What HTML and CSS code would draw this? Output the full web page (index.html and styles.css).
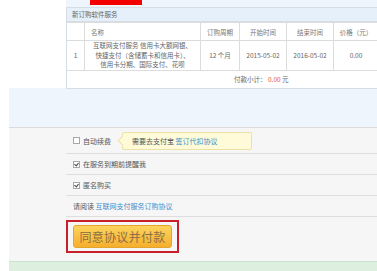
FILE: index.html
```
<!DOCTYPE html>
<html lang="zh-CN">
<head>
  <meta charset="UTF-8">
  <title>订购软件服务</title>
  <link rel="stylesheet" href="styles.css">
</head>
<body>
  <div class="page">
    <div class="top">
      <div class="top-side"></div>
      <div class="top-main">
        <div class="mark"></div>
        <div class="panel">
          <div class="panel-title">新订购软件服务</div>
          <table class="orders">
            <thead>
              <tr>
                <th class="c-no"></th>
                <th class="c-name">名称</th>
                <th class="c-period">订购周期</th>
                <th class="c-date">开始时间</th>
                <th class="c-date">结束时间</th>
                <th class="c-price">价格（元）</th>
                <th class="c-extra"></th>
              </tr>
            </thead>
            <tbody>
              <tr>
                <td>1</td>
                <td class="name">互联网支付服务 信用卡大额网银、<br>快捷支付（含储蓄卡和信用卡）、<br>信用卡分期、国际支付、花呗</td>
                <td>12 个月</td>
                <td>2015-05-02</td>
                <td>2016-05-02</td>
                <td>0.00</td>
                <td></td>
              </tr>
            </tbody>
          </table>
          <div class="total">付款小计： <span class="amount">0.00</span> 元</div>
        </div>
      </div>
    </div>
    <div class="top-gap"></div>

    <div class="options">
      <div class="opt opt-first">
        <span class="check"></span>
        <span>自动续费</span>
        <span class="tip">需要去支付宝 <a href="#">签订代扣协议</a></span>
      </div>
      <div class="opt">
        <span class="check checked"></span>
        <span>在服务到期前提醒我</span>
      </div>
      <div class="opt">
        <span class="check checked"></span>
        <span>匿名购买</span>
      </div>
      <div class="opt">
        <span>请阅读 <a href="#">互联网支付服务订购协议</a></span>
      </div>
      <div class="pay-area">
        <div class="highlight">
          <button class="pay-btn">同意协议并付款</button>
        </div>
      </div>
    </div>
    <div class="footer-band"></div>
  </div>
</body>
</html>
```

FILE: styles.css
```
html, body {
  margin: 0;
  padding: 0;
  overflow: hidden;
  background: #fff;
}
body {
  width: 377px;
  height: 271px;
  font-family: "Noto Sans CJK SC", "Liberation Sans", sans-serif;
  color: #666;
  font-size: 6.5px;
}
a {
  color: #3b8ccc;
  text-decoration: none;
}
.page {
  margin-left: 9px;
  width: 368px;
  overflow: hidden;
}
.top {
  display: flex;
  height: 88px;
}
.top-side {
  width: 57px;
  flex: none;
  background: #fff;
}
.top-main {
  flex: 1;
  min-width: 0;
  background: #eef5fc;
  position: relative;
  padding-top: 7px;
}
.mark {
  position: absolute;
  left: 24px;
  top: 0;
  width: 52px;
  height: 5px;
  background: #f30000;
}
.panel {
  background: #fff;
  border: 1px solid #d6dde4;
  border-right: none;
  height: 80px;
  overflow: hidden;
}
.panel-title {
  height: 13px;
  line-height: 13px;
  padding-left: 5px;
  background: #e5f0fa;
  border-bottom: 1px solid #d6dde4;
}
.orders {
  border-collapse: collapse;
  table-layout: fixed;
  width: 340px;
}
.orders th, .orders td {
  border: 1px solid #dcdcdc;
  font-weight: normal;
  text-align: center;
  padding: 0;
  white-space: nowrap;
}
.orders tr > :first-child {
  border-left: none;
}
.orders th {
  height: 17px;
  color: #777;
}
.orders td {
  height: 29px;
  line-height: 9.5px;
}
.orders th.c-name {
  text-align: left;
  text-indent: 6px;
}
.c-no { width: 17px; }
.c-name { width: 115px; }
.c-period { width: 38px; }
.c-date { width: 46px; }
.c-price { width: 44px; }
.c-extra { width: 34px; }
.total {
  height: 17px;
  line-height: 17px;
  padding-left: 167px;
}
.amount {
  color: #e0563c;
}
.top-gap {
  height: 39px;
  background: #eef5fc;
  border-bottom: 1px solid #dcdcdc;
}
.options {
  background: #f6f6f6;
  padding-left: 57px;
  height: 133px;
  font-size: 7px;
  color: #555;
}
.opt {
  display: flex;
  align-items: center;
  gap: 3px;
  height: 20px;
  border-bottom: 1px solid #dedede;
  padding-left: 7px;
}
.opt-first {
  height: 25px;
}
.check {
  width: 5px;
  height: 5px;
  border: 1px solid #a8a8a8;
  background: #fff;
  position: relative;
}
.check.checked::after {
  content: "";
  position: absolute;
  left: 1px;
  top: 0;
  width: 2px;
  height: 3px;
  border: solid #444;
  border-width: 0 1px 1px 0;
  transform: rotate(40deg);
}
.tip {
  position: relative;
  margin-left: 8px;
  background: #fffbd8;
  border: 1px solid #ece2a8;
  border-radius: 2px;
  padding: 0 7px 0 9px;
  width: 112px;
  height: 16px;
  line-height: 16px;
  color: #555;
}
.tip::before {
  content: "";
  position: absolute;
  left: -4px;
  top: 4px;
  width: 6px;
  height: 6px;
  background: #fffbd8;
  border-left: 1px solid #ece2a8;
  border-bottom: 1px solid #ece2a8;
  transform: rotate(45deg);
}
.pay-area {
  padding-top: 3px;
}
.highlight {
  display: inline-block;
  border: 2px solid #c8202b;
  padding: 3px 5px;
}
.pay-btn {
  display: block;
  width: 99px;
  height: 23px;
  border: 1px solid #e3a52a;
  border-radius: 3px;
  background: linear-gradient(#fcd45e, #f6ae2c);
  color: #8a6d44;
  font-family: "Noto Sans CJK SC", sans-serif;
  font-size: 12px;
  padding: 0;
  letter-spacing: 0.3px;
}
.footer-band {
  height: 10px;
  background: #ddf0df;
  border-top: 1px solid #c9e4cc;
}
```
